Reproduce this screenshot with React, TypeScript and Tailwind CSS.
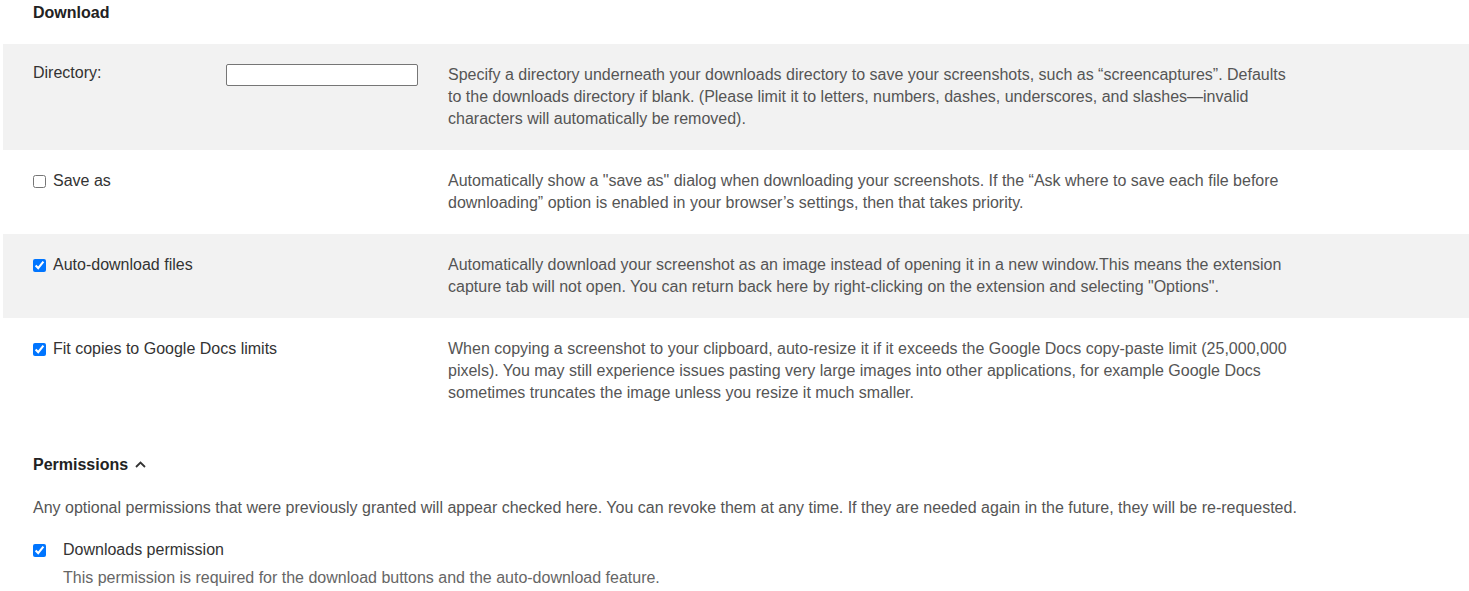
import React from 'react';

type Row = {
  label: string;
  kind: 'input' | 'checkbox';
  checked?: boolean;
  desc: React.ReactNode;
  shaded: boolean;
};

const rows: Row[] = [
  {
    label: 'Directory:',
    kind: 'input',
    shaded: true,
    desc: 'Specify a directory underneath your downloads directory to save your screenshots, such as \u201cscreencaptures\u201d. Defaults to the downloads directory if blank. (Please limit it to letters, numbers, dashes, underscores, and slashes\u2014invalid characters will automatically be removed).',
  },
  {
    label: 'Save as',
    kind: 'checkbox',
    checked: false,
    shaded: false,
    desc: 'Automatically show a "save as" dialog when downloading your screenshots. If the \u201cAsk where to save each file before downloading\u201d option is enabled in your browser\u2019s settings, then that takes priority.',
  },
  {
    label: 'Auto-download files',
    kind: 'checkbox',
    checked: true,
    shaded: true,
    desc: 'Automatically download your screenshot as an image instead of opening it in a new window.This means the extension capture tab will not open. You can return back here by right-clicking on the extension and selecting "Options".',
  },
  {
    label: 'Fit copies to Google Docs limits',
    kind: 'checkbox',
    checked: true,
    shaded: false,
    desc: 'When copying a screenshot to your clipboard, auto-resize it if it exceeds the Google Docs copy-paste limit (25,000,000 pixels). You may still experience issues pasting very large images into other applications, for example Google Docs sometimes truncates the image unless you resize it much smaller.',
  },
];

function OptionRow({ row }: { row: Row }) {
  return (
    <div className={`flex px-[30px] py-5 ${row.shaded ? 'bg-[#f2f2f2]' : 'bg-white'}`}>
      <div className="w-[415px] shrink-0 flex items-start">
        {row.kind === 'input' ? (
          <>
            <span className="w-[193px] shrink-0 -mt-[2px] text-[#333]">{row.label}</span>
            <input
              type="text"
              className="w-[192px] h-[22px] bg-white border border-[#767676] rounded-[2px] px-1 text-[13px]"
            />
          </>
        ) : (
          <label className="flex items-center gap-[7px] text-[#333]">
            <input type="checkbox" defaultChecked={row.checked} className="w-[13px] h-[13px] mt-px" />
            {row.label}
          </label>
        )}
      </div>
      <p className="w-[850px] text-[#555]">{row.desc}</p>
    </div>
  );
}

export default function App() {
  return (
    <div className="min-h-screen bg-white font-['Liberation_Sans',Arial,sans-serif] text-[16px] leading-[22px] pl-[3px]">
      <h2 className="px-[30px] pt-[2px] pb-[20px] font-bold text-[#222]">Download</h2>
      {rows.map((row) => (
        <OptionRow key={row.label} row={row} />
      ))}

      {/* Permissions */}
      <div className="px-[30px] mt-[30px]">
        <h2 className="flex items-center gap-[7px] font-bold text-[#222]">
          Permissions
          <svg width="11" height="7" viewBox="0 0 11 7" fill="none" className="mt-[-1px]">
            <polyline points="1,6 5.5,1.5 10,6" stroke="#333" strokeWidth="1.8" />
          </svg>
        </h2>
        <p className="mt-[21px] text-[#555]">
          Any optional permissions that were previously granted will appear checked here. You can revoke them at any time. If they are needed again in the future, they will be re-requested.
        </p>
        <label className="mt-5 flex items-center gap-[17px] text-[#333]">
          <input type="checkbox" defaultChecked className="w-[13px] h-[13px]" />
          Downloads permission
        </label>
        <p className="mt-[6px] pl-[30px] text-[#666]">
          This permission is required for the download buttons and the auto-download feature.
        </p>
      </div>
    </div>
  );
}
